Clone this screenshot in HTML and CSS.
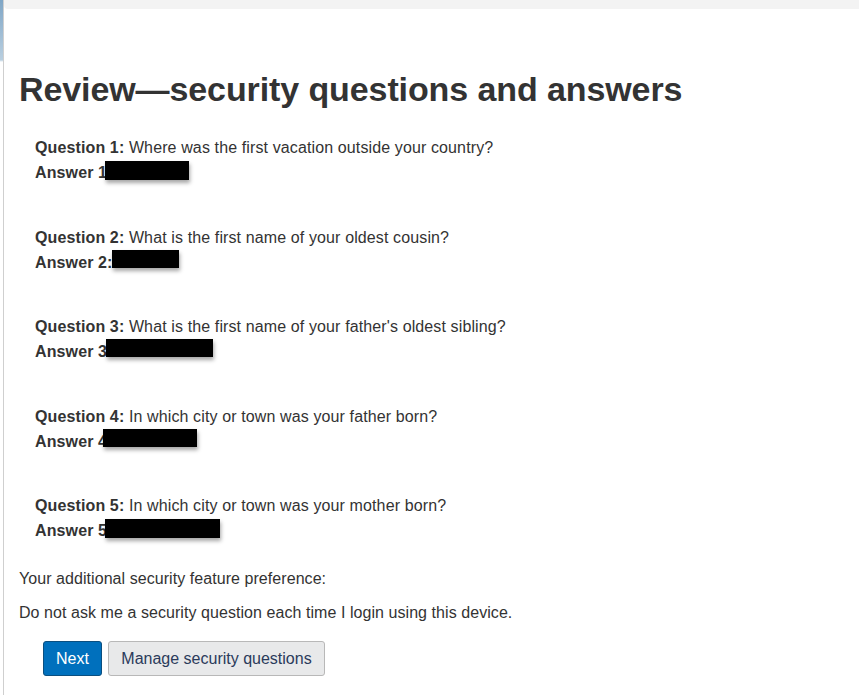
FILE: index.html
```
<!DOCTYPE html>
<html lang="en">
<head>
  <meta charset="UTF-8">
  <title>Review security questions</title>
  <link rel="stylesheet" href="styles.css">
</head>
<body>
  <div class="frame">
    <div class="topbar"></div>
    <div class="content">
      <h1>Review&mdash;security questions and answers</h1>

      <div class="qa-list">
        <div class="qa">
          <p><b>Question 1:</b> Where was the first vacation outside your country?</p>
          <p class="ans"><b>Answer 1:</b> <span class="redact r1"></span></p>
        </div>
        <div class="qa">
          <p><b>Question 2:</b> What is the first name of your oldest cousin?</p>
          <p class="ans"><b>Answer 2:</b> <span class="redact r2"></span></p>
        </div>
        <div class="qa">
          <p><b>Question 3:</b> What is the first name of your father's oldest sibling?</p>
          <p class="ans"><b>Answer 3:</b> <span class="redact r3"></span></p>
        </div>
        <div class="qa">
          <p><b>Question 4:</b> In which city or town was your father born?</p>
          <p class="ans"><b>Answer 4:</b> <span class="redact r4"></span></p>
        </div>
        <div class="qa">
          <p><b>Question 5:</b> In which city or town was your mother born?</p>
          <p class="ans"><b>Answer 5:</b> <span class="redact r5"></span></p>
        </div>
      </div>

      <p class="pref">Your additional security feature preference:</p>
      <p class="pref">Do not ask me a security question each time I login using this device.</p>

      <div class="actions">
        <button class="btn btn-primary">Next</button>
        <button class="btn btn-default">Manage security questions</button>
      </div>
    </div>
  </div>
</body>
</html>
```

FILE: styles.css
```
* {
  margin: 0;
  padding: 0;
  box-sizing: border-box;
}

body {
  font-family: "Liberation Sans", Arial, sans-serif;
  color: #333;
  width: 859px;
  height: 695px;
  overflow: hidden;
  /* blue sliver of the window behind, left edge */
  background: linear-gradient(to bottom, #7fa6c6 0, #b9cfe0 60px, #fff 62px) no-repeat left top / 3px 100%;
  background-color: #fff;
}

.frame {
  margin-left: 3px;
  border-left: 1px solid #cfcfcf;
  min-height: 695px;
}

.topbar {
  height: 9px;
  background: #f3f3f3;
  border-bottom-left-radius: 4px;
}

.content {
  padding: 60px 0 0 15px;
}

h1 {
  font-size: 34px;
  font-weight: bold;
  line-height: 40px;
  letter-spacing: -0.1px;
  margin-bottom: 26px;
}

.qa-list {
  padding-left: 16px;
}

.qa {
  margin-bottom: 40px;
  font-size: 16px;
  line-height: 25px;
  letter-spacing: 0.12px;
}

.qa:nth-child(2) {
  margin-bottom: 39px;
}

.qa:nth-child(4) {
  margin-bottom: 39px;
}

.qa:last-child {
  margin-bottom: 26px;
}

.ans {
  position: relative;
}

/* black boxes hiding the answers */
.redact {
  position: absolute;
  top: 1px;
  height: 19px;
  background: #000;
  box-shadow: 1px 3px 4px rgba(0, 0, 0, 0.35);
}

.r1 { left: 70px; width: 84px; }
.r2 { left: 77px; width: 67px; top: 0; height: 18px; }
.r3 { left: 71px; width: 107px; top: 0; height: 18px; }
.r4 { left: 68px; width: 94px; top: 0; height: 18px; }
.r5 { left: 70px; width: 115px; }

.pref {
  font-size: 16px;
  line-height: 20px;
  letter-spacing: 0.06px;
  margin-bottom: 14px;
}

.actions {
  padding-left: 24px;
  display: flex;
  gap: 6px;
  margin-top: 18px;
}

.btn {
  font-family: "Liberation Sans", Arial, sans-serif;
  font-size: 16px;
  height: 35px;
  padding: 0 11px;
  border-radius: 3px;
  cursor: pointer;
}

.btn-primary {
  background: #0070bd;
  color: #fff;
  border: 1px solid #0b4f80;
  width: 59px;
}

.btn-default {
  background: #e8e9ea;
  color: #2b3b5b;
  border: 1px solid #b8b8b8;
  width: 217px;
}
```
